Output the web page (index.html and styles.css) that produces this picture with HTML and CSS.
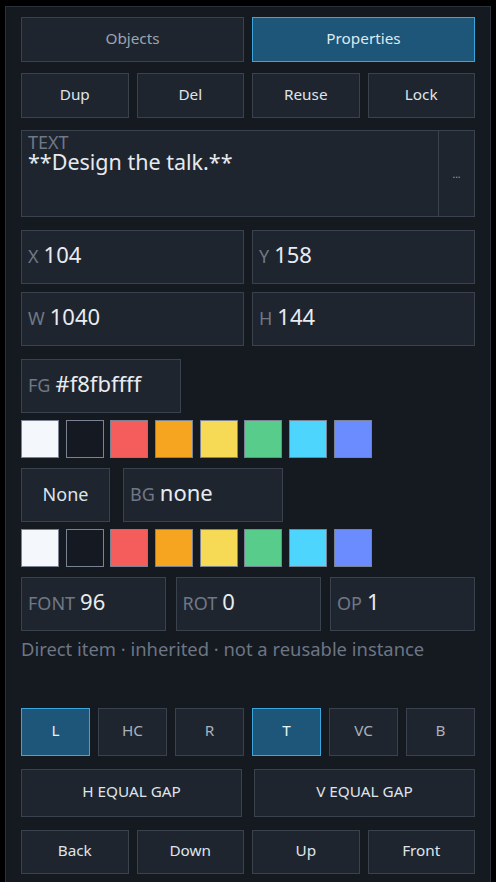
FILE: index.html
```html
<!DOCTYPE html>
<html lang="en">
<head>
  <meta charset="UTF-8">
  <meta name="viewport" content="width=device-width, initial-scale=1.0">
  <title>Properties</title>
  <link rel="stylesheet" href="styles.css">
</head>
<body>
<div class="panel">
  <div class="row two tabs">
    <button class="btn tab">Objects</button>
    <button class="btn tab active">Properties</button>
  </div>

  <div class="row four item-actions">
    <button class="btn">Dup</button>
    <button class="btn">Del</button>
    <button class="btn">Reuse</button>
    <button class="btn">Lock</button>
  </div>

  <div class="text-box">
    <div class="text-main">
      <div class="lbl">TEXT</div>
      <textarea class="text-input" rows="2">**Design the talk.**</textarea>
    </div>
    <button class="more-btn">...</button>
  </div>

  <div class="row two fields">
    <div class="field"><span class="lbl">X</span><span class="val">104</span></div>
    <div class="field"><span class="lbl">Y</span><span class="val">158</span></div>
  </div>
  <div class="row two fields last">
    <div class="field"><span class="lbl">W</span><span class="val">1040</span></div>
    <div class="field"><span class="lbl">H</span><span class="val">144</span></div>
  </div>

  <div class="color-line">
    <div class="field color-field"><span class="lbl">FG</span><span class="val">#f8fbffff</span></div>
  </div>
  <div class="swatches">
    <span class="sw" style="background:#f4f7fc"></span>
    <span class="sw" style="background:#141922"></span>
    <span class="sw" style="background:#f55d5d"></span>
    <span class="sw" style="background:#f5a51f"></span>
    <span class="sw" style="background:#f6d955"></span>
    <span class="sw" style="background:#57cc8b"></span>
    <span class="sw" style="background:#4dd5fe"></span>
    <span class="sw" style="background:#6a8cff"></span>
  </div>

  <div class="color-line">
    <button class="btn none-btn">None</button>
    <div class="field color-field"><span class="lbl">BG</span><span class="val">none</span></div>
  </div>
  <div class="swatches">
    <span class="sw" style="background:#f4f7fc"></span>
    <span class="sw" style="background:#141922"></span>
    <span class="sw" style="background:#f55d5d"></span>
    <span class="sw" style="background:#f5a51f"></span>
    <span class="sw" style="background:#f6d955"></span>
    <span class="sw" style="background:#57cc8b"></span>
    <span class="sw" style="background:#4dd5fe"></span>
    <span class="sw" style="background:#6a8cff"></span>
  </div>

  <div class="row three fields text-attrs">
    <div class="field"><span class="lbl">FONT</span><span class="val">96</span></div>
    <div class="field"><span class="lbl">ROT</span><span class="val">0</span></div>
    <div class="field"><span class="lbl">OP</span><span class="val">1</span></div>
  </div>

  <p class="note">Direct item · inherited · not a reusable instance</p>

  <div class="row six align-row">
    <button class="btn active">L</button>
    <button class="btn dim">HC</button>
    <button class="btn dim">R</button>
    <button class="btn active">T</button>
    <button class="btn dim">VC</button>
    <button class="btn dim">B</button>
  </div>

  <div class="row two gap-row">
    <button class="btn">H EQUAL GAP</button>
    <button class="btn">V EQUAL GAP</button>
  </div>

  <div class="row four order-row">
    <button class="btn">Back</button>
    <button class="btn">Down</button>
    <button class="btn">Up</button>
    <button class="btn">Front</button>
  </div>
</div>
</body>
</html>
```

FILE: styles.css
```css
body {
  margin: 0;
  background: #000;
  font-family: "Noto Sans", "Open Sans", sans-serif;
  color: #e2e6ec;
}

.panel {
  margin: 6px 0 0 5px;
  width: 486px;
  box-sizing: border-box;
  min-height: 876px;
  background: #151920;
  border: 1px solid #2b313b;
  border-bottom: none;
  padding: 10px 15px 0;
}

.row {
  display: grid;
  gap: 8px;
}

.two { grid-template-columns: 1fr 1fr; }
.three { grid-template-columns: 1fr 1fr 1fr; gap: 9.5px; }
.four { grid-template-columns: repeat(4, 1fr); }
.six { grid-template-columns: repeat(6, 1fr); }

.btn {
  background: #1f252f;
  border: 1px solid #3a424e;
  color: #dfe4ea;
  font-family: inherit;
  font-size: 15.3px;
  padding: 0 0 4px;
  cursor: pointer;
}

.btn.active {
  background: #1d5678;
  border-color: #3ba5dd;
  color: #e8f1f8;
}

.btn.dim { color: #a9b1bc; }

.tabs { height: 45px; margin-bottom: 11px; }
.tab { color: #9ba5b1; }
.tabs .active { color: #dfe9f2; }

.item-actions { height: 45px; margin-bottom: 12px; }

.text-box {
  display: flex;
  height: 87px;
  box-sizing: border-box;
  background: #1f252f;
  border: 1px solid #3a424e;
  margin-bottom: 13px;
}

.text-main {
  flex: 1;
  padding: 2px 6px 0;
}

.lbl {
  font-size: 18px;
  line-height: 18px;
  color: #6f7886;
}

.text-input {
  display: block;
  width: 100%;
  box-sizing: border-box;
  background: transparent;
  border: none;
  padding: 0;
  margin: 0;
  resize: none;
  outline: none;
  font-family: inherit;
  font-size: 21.5px;
  line-height: 22px;
  color: #e6eaef;
}

.more-btn {
  width: 36px;
  background: transparent;
  border: none;
  border-left: 1px solid #3a424e;
  color: #9aa3ae;
  font-size: 10px;
  padding: 0;
  font-family: inherit;
}

.fields { height: 54px; margin-bottom: 8px; }
.fields.last { margin-bottom: 13px; }
.fields.text-attrs { margin-bottom: 0; }

.field {
  display: flex;
  align-items: baseline;
  gap: 5px;
  background: #1f252f;
  border: 1px solid #3a424e;
  padding: 8px 6px 0;
  box-sizing: border-box;
}

.val {
  font-size: 22px;
  line-height: 30px;
  color: #e8ecf1;
}

.color-line {
  display: flex;
  gap: 13px;
  height: 54px;
  margin-bottom: 7px;
}

.color-field { width: 160px; }

.none-btn { width: 89px; font-size: 18px; padding-bottom: 2px; }

.swatches {
  display: flex;
  gap: 6.7px;
  margin-bottom: 10px;
}

.sw {
  width: 38px;
  height: 38px;
  box-sizing: border-box;
  border: 1px solid #7a8394;
}

.note {
  margin: 6px 0 0;
  font-size: 18.4px;
  line-height: 24px;
  color: #6c7684;
}

.align-row { height: 48px; margin-top: 47px; margin-bottom: 13px; }

.gap-row { height: 48px; gap: 12px; margin-bottom: 13px; }

.order-row { height: 44px; }
```
